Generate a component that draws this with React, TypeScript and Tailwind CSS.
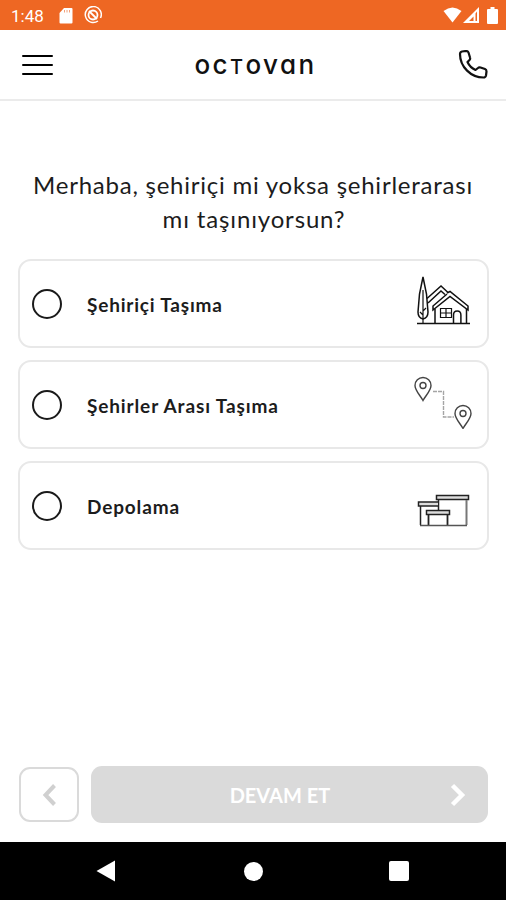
import type { ReactNode } from 'react';

const HouseIcon = () => (
  <svg className="h-[54px] w-[56px]" viewBox="0 0 56 54" fill="none" stroke="#111" strokeWidth="1.5">
    <path d="M9 3 5.500 20 4 38q0 6 5 7 5-1 5-7L12.500 20Z" />
    <path d="M9 16v34M9 41l-3-3M9 37l3-3" strokeWidth="1.200" />
    <path d="M13 24.500 27 12l7 6.500M14 29l13-12 4 3.500" />
    <path d="M33 19l3-1.500L54 32v4L36 22.500 19 36v-4L33 20" />
    <path d="M21 35v14M52.500 35v14" />
    <path d="M3 49.500h53" strokeWidth="1.700" />
    <path d="M26.500 34.500h11v9h-11ZM32 34.500v9M26.500 39h11" strokeWidth="1.200" />
    <path d="M39.500 49v-8q0-4 3.700-4t3.700 4v8" />
  </svg>
);

const RouteIcon = () => (
  <svg className="h-[54px] w-[60px]" viewBox="0 0 60 54" fill="none" stroke="#444" strokeWidth="1.400">
    <path d="M10 25.500C7 20 2 15.500 2 10.500a8 8 0 0 1 16 0C18 15.500 13 20 10 25.500Z" />
    <circle cx="10" cy="10.500" r="3" />
    <path d="M50 53.500C47 48 42 43.500 42 38.500a8 8 0 0 1 16 0C58 43.500 53 48 50 53.500Z" />
    <circle cx="50" cy="38.500" r="3" />
    <path d="M20 16.500h10.500v25.500H41" stroke="#a5a5a5" strokeDasharray="4 1" />
  </svg>
);

const BoxesIcon = () => (
  <svg className="h-[36px] w-[54px]" viewBox="0 0 54 36" fill="none" stroke="#222" strokeWidth="1.500">
    <path d="M20.500 2.500h32v4h-32Z" fill="#ddd" />
    <path d="M22.500 7v10" />
    <path d="M50.500 7v25" stroke="#777" strokeWidth="2" />
    <path d="M22 9H2.500v4H22" fill="#ddd" />
    <path d="M4.500 13v19" />
    <path d="M10.500 17.500h23v4h-23Z" fill="#ddd" />
    <path d="M12.500 22v10M31.500 22v10" strokeWidth="1.800" />
    <path d="M4 32.500h47" stroke="#555" />
  </svg>
);

const options: { label: string; icon: ReactNode; iconClass: string; labelClass: string }[] = [
  {
    label: 'Şehiriçi Taşıma',
    icon: <HouseIcon />,
    iconClass: 'mr-[17px] -mt-[5px]',
    labelClass: 'tracking-[0.8px]',
  },
  {
    label: 'Şehirler Arası Taşıma',
    icon: <RouteIcon />,
    iconClass: 'mr-[14px] -mt-[6px]',
    labelClass: 'tracking-[0.87px]',
  },
  {
    label: 'Depolama',
    icon: <BoxesIcon />,
    iconClass: 'mr-[17px] mt-[11px]',
    labelClass: 'tracking-[0.85px]',
  },
];

const StatusBar = () => (
  <div className="flex h-[30px] items-center bg-[#ee6723] pl-[11px] pr-[8px] text-white">
    <span className="w-[48px] pt-[2px] font-['Roboto',sans-serif] text-[17px] leading-none">1:48</span>
    <svg className="mt-px h-[16px] w-[14px]" viewBox="0 0 14 16">
      <path d="M5 0h7.500q1 0 1 1v13.500q0 1-1 1h-11q-1 0-1-1V5Z" fill="#fff" />
      <path d="M5.500 2v2.500M8 2v2.500M10.500 2v2.500" stroke="#f2a27c" strokeWidth="1" />
    </svg>
    <svg className="ml-[11px] h-[18px] w-[18px]" viewBox="0 0 18 18" fill="none" stroke="#fff">
      <path d="M14 15A8 8 0 1 1 16.500 12" strokeWidth="1.500" />
      <circle cx="9" cy="9" r="4.500" strokeWidth="1.800" />
      <path d="m5 5 8 8" strokeWidth="1.800" />
    </svg>
    <div className="ml-auto flex items-center">
      <svg className="h-[16px] w-[19px]" viewBox="0 0 19 16">
        <path d="M0.500 4Q9.500-3.200 18.500 4L9.500 15.500Z" fill="#fff" />
      </svg>
      <svg className="ml-px h-[16px] w-[16px]" viewBox="0 0 16 16">
        <path d="M0 16 16 0v16Z" fill="#fff" />
        <path d="M6 14 10.500 9.500V14ZM12.500 6.500l1.500-2V14h-1.500Z" fill="#ee6723" />
      </svg>
      <svg className="ml-[8px] h-[17px] w-[11px]" viewBox="0 0 11 17">
        <path d="M3.500 0h4v2H10q1 0 1 1v13q0 1-1 1H1q-1 0-1-1V3q0-1 1-1h2.500Z" fill="#fff" />
      </svg>
    </div>
  </div>
);

const Header = () => (
  <header className="flex h-[71px] items-center justify-between border-b-2 border-[#ebebeb] pl-[22px] pr-[18px]">
    <button className="flex w-[31px] flex-col gap-[7px]" aria-label="Menü">
      <span className="h-[2px] w-full rounded-full bg-black" />
      <span className="h-[2px] w-full rounded-full bg-black" />
      <span className="h-[2px] w-full rounded-full bg-black" />
    </button>
    <div className="flex items-baseline font-['Inter',sans-serif] text-[26px] leading-none font-medium tracking-[2.4px] text-[#111] [font-feature-settings:'cv11']">
      <span>oc</span>
      <span className="text-[20px]">T</span>
      <span>ovan</span>
    </div>
    <svg className="h-[30px] w-[30px]" viewBox="0 0 30 30" fill="none" stroke="#111" strokeWidth="2.200" strokeLinejoin="round">
      <path d="M2 4q0-2 2-2.500l4-.5q2 0 2.500 1.500l1.500 5q.5 1.500-.5 2.500L9.500 12q2.500 5.500 8 8l2.500-2q1-1 2.500-.500l4.500 1.500q1.500.500 1.500 2.500l-.500 4q-.500 2-2.500 2C13 27.500 2 17 2 4Z" />
    </svg>
  </header>
);

export default function App() {
  return (
    <div className="flex h-[900px] w-[506px] flex-col overflow-hidden bg-white font-['Lato',sans-serif] text-[#1c1c1c]">
      <StatusBar />
      <Header />

      <main className="flex flex-1 flex-col px-[18px]">
        <h1 className="mt-[67px] text-center text-[24px] leading-[34px] whitespace-nowrap">
          <span className="tracking-[0.76px]">Merhaba, şehiriçi mi yoksa şehirlerarası</span>
          <br />
          <span className="pl-[2px] tracking-[0.85px]">mı taşınıyorsun?</span>
        </h1>

        <div className="mt-[23px] flex flex-col gap-[12px]">
          {options.map((option) => (
            <label
              key={option.label}
              className="flex h-[89px] w-[471px] items-center rounded-[13px] border-2 border-[#e8e8e8] pl-[12px]"
            >
              <span className="h-[30px] w-[30px] rounded-full border-2 border-[#1a1a1a]" />
              <span className={`ml-[25px] pt-[3px] text-[19px] font-bold ${option.labelClass}`}>
                {option.label}
              </span>
              <span className={`ml-auto ${option.iconClass}`}>{option.icon}</span>
            </label>
          ))}
        </div>

        <div className="mt-auto mb-[19px] flex items-center gap-[12px] pl-px">
          <button
            className="flex h-[55px] w-[60px] items-center justify-center rounded-[11px] border-2 border-[#dadada]"
            aria-label="Geri"
          >
            <svg className="h-[22px] w-[14px]" viewBox="0 0 14 22" fill="none" stroke="#d0d0d0" strokeWidth="4">
              <path d="m12.500 1.500-9 9.500 9 9.500" />
            </svg>
          </button>
          <button className="flex h-[57px] w-[398px] items-center rounded-[11px] bg-[#dadada] pr-[22px] text-white">
            <span className="flex-1 pl-[19px] text-center text-[20px] font-bold">DEVAM ET</span>
            <svg className="h-[24px] w-[16px]" viewBox="0 0 16 24" fill="none" stroke="#fff" strokeWidth="4.500">
              <path d="m2.500 2.500 9.500 9.500-9.500 9.500" />
            </svg>
          </button>
        </div>
      </main>

      <nav className="flex h-[58px] items-center bg-black pl-[96px]">
        <svg className="h-[22px] w-[19px]" viewBox="0 0 19 22">
          <path d="M0.500 11 19 0.500v21Z" fill="#fff" />
        </svg>
        <span className="ml-[129px] h-[19px] w-[19px] rounded-full bg-white" />
        <span className="ml-[126px] h-[20px] w-[20px] rounded-[2px] bg-white" />
      </nav>
    </div>
  );
}
